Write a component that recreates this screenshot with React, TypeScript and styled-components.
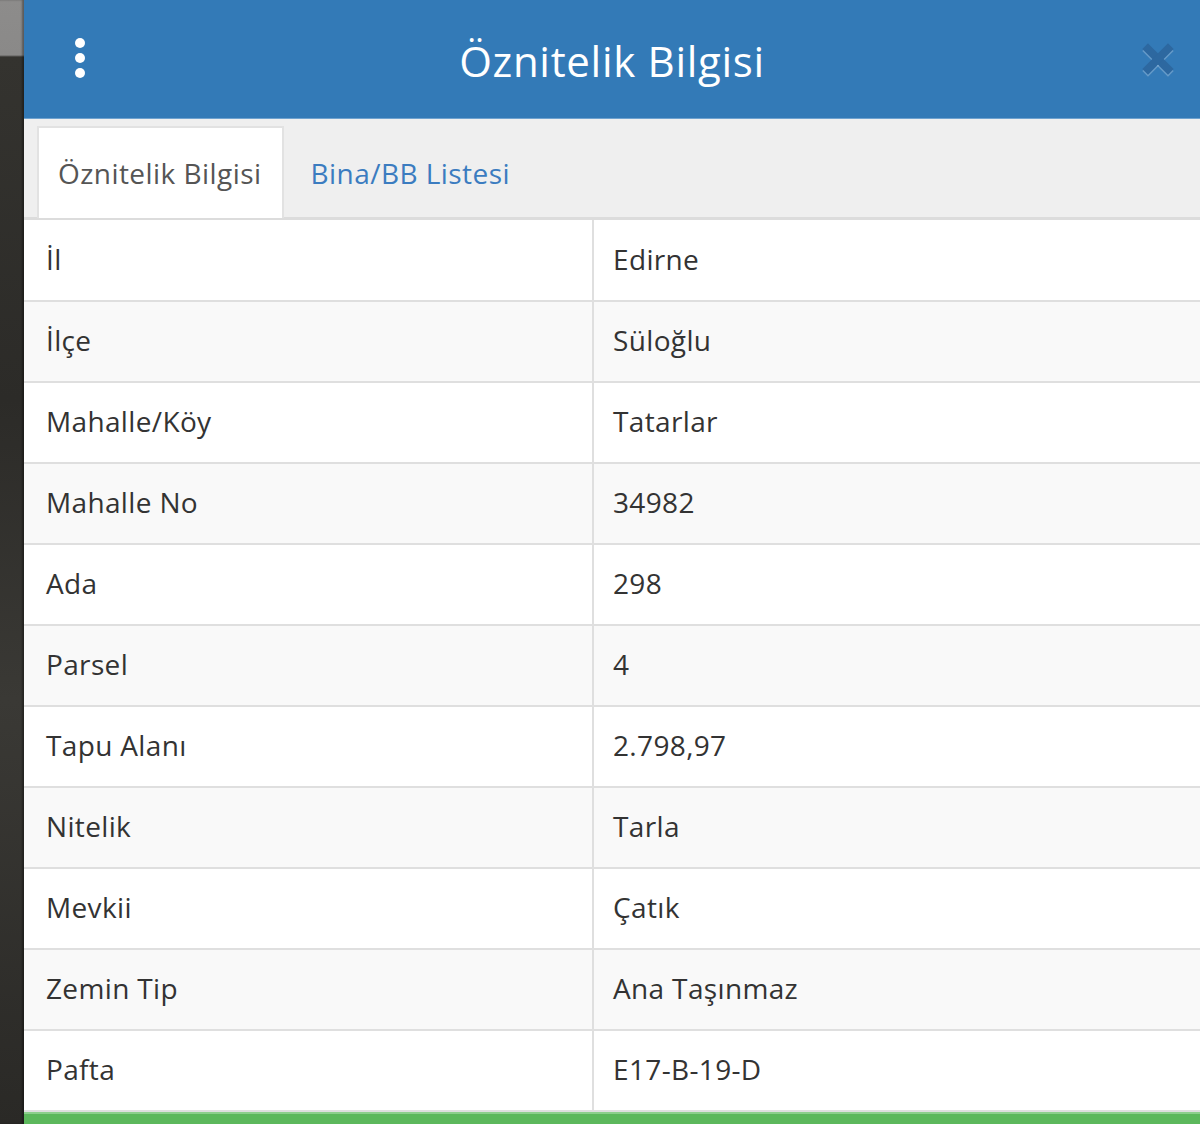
import React from 'react';
import styled, { createGlobalStyle } from 'styled-components';

const GlobalStyle = createGlobalStyle`
    html, body {
        margin: 0;
        padding: 0;
        background: #2f2e2c;
    }
    body {
        font-family: 'Open Sans', 'Liberation Sans', sans-serif;
        color: #333;
    }
`;

const Page = styled.div`
    display: flex;
    width: 1200px;
    height: 1124px;
    overflow: hidden;
`;

// the map shows through on the left edge
const MapEdge = styled.div`
    width: 24px;
    flex-shrink: 0;
    background: linear-gradient(
        to bottom,
        #8d8c8b 0px,
        #8a8988 55px,
        #34332f 57px,
        #2c2b28 400px,
        #3a3935 700px,
        #2a2926 1124px
    );
    box-shadow: inset -2px 0 2px rgba(0, 0, 0, 0.35);
`;

const Panel = styled.div`
    flex: 1;
    display: flex;
    flex-direction: column;
    background: #fff;
    min-width: 0;
`;

const Header = styled.div`
    height: 118px;
    flex-shrink: 0;
    background: #337ab7;
    border-bottom: 1px solid #6fa2cf;
    display: flex;
    align-items: center;
`;

const MenuButton = styled.button`
    width: 112px;
    height: 100%;
    display: flex;
    flex-direction: column;
    align-items: center;
    justify-content: center;
    gap: 5px;
    background: none;
    border: 0;
    padding: 0 0 2px 0;
    cursor: pointer;
`;

const Dot = styled.span`
    width: 10px;
    height: 10px;
    border-radius: 50%;
    background: #fff;
`;

const Title = styled.h1`
    flex: 1;
    margin: 0;
    text-align: center;
    color: #fff;
    font-size: 42px;
    font-weight: 500;
    letter-spacing: 0.7px;
    padding-top: 2px;
`;

const CloseButton = styled.button`
    width: 112px;
    height: 100%;
    display: flex;
    align-items: center;
    justify-content: center;
    background: none;
    border: 0;
    padding: 0 0 0 28px;
    cursor: pointer;
`;

const TabBar = styled.div`
    flex-shrink: 0;
    display: flex;
    align-items: flex-end;
    height: 98px;
    padding: 0 13px;
    background: #efefef;
    border-bottom: 3px solid #dcdcdc;
`;

const Tab = styled.div<{ $active?: boolean }>`
    height: 90px;
    display: flex;
    align-items: center;
    padding: 0 ${p => (p.$active ? '20px 0 19px' : '21px')};
    margin-right: 4px;
    margin-bottom: -1px;
    font-size: 28px;
    letter-spacing: 0.45px;
    color: ${p => (p.$active ? '#555' : '#3b7cc0')};
    background: ${p => (p.$active ? '#fff' : 'transparent')};
    border: 2px solid ${p => (p.$active ? '#e2e2e2' : 'transparent')};
    border-bottom: 0;
`;

const Table = styled.table`
    width: 100%;
    border-collapse: collapse;
    table-layout: fixed;
`;

const Row = styled.tr`
    height: 81px;
    border-bottom: 2px solid #dfdfdf;
    background: #fff;

    &:nth-child(even) {
        background: #f9f9f9;
    }
`;

const Cell = styled.td<{ $label?: boolean }>`
    box-sizing: border-box;
    width: ${p => (p.$label ? '569px' : 'auto')};
    padding: 0 0 3px ${p => (p.$label ? '22px' : '19px')};
    font-size: 28px;
    letter-spacing: 0.35px;
    color: #333;
    border-right: ${p => (p.$label ? '2px solid #dfdfdf' : '0')};
    vertical-align: middle;
    white-space: nowrap;
`;

const Filler = styled.div`
    flex: 1;
`;

const StatusBar = styled.div`
    height: 12px;
    flex-shrink: 0;
    background: #5cb85c;
    border-top: 2px solid #8ccf8c;
`;

const CloseIcon = () => (
    <svg width="32" height="32" viewBox="0 0 32 32" style={{ overflow: 'visible' }}>
        <g strokeWidth="8" strokeLinecap="square">
            <g stroke="rgba(255,255,255,0.25)" transform="translate(0 2)">
                <line x1="6" y1="6" x2="26" y2="26" />
                <line x1="26" y1="6" x2="6" y2="26" />
            </g>
            <g stroke="#2d68a0">
                <line x1="6" y1="6" x2="26" y2="26" />
                <line x1="26" y1="6" x2="6" y2="26" />
            </g>
        </g>
    </svg>
);

const rows: [string, string][] = [
    ['İl', 'Edirne'],
    ['İlçe', 'Süloğlu'],
    ['Mahalle/Köy', 'Tatarlar'],
    ['Mahalle No', '34982'],
    ['Ada', '298'],
    ['Parsel', '4'],
    ['Tapu Alanı', '2.798,97'],
    ['Nitelik', 'Tarla'],
    ['Mevkii', 'Çatık'],
    ['Zemin Tip', 'Ana Taşınmaz'],
    ['Pafta', 'E17-B-19-D'],
];

const App = () => {
    return (
        <Page>
            <GlobalStyle />
            <MapEdge />
            <Panel>
                <Header>
                    <MenuButton aria-label="menu">
                        <Dot />
                        <Dot />
                        <Dot />
                    </MenuButton>
                    <Title>Öznitelik Bilgisi</Title>
                    <CloseButton aria-label="close">
                        <CloseIcon />
                    </CloseButton>
                </Header>
                <TabBar>
                    <Tab $active>Öznitelik Bilgisi</Tab>
                    <Tab>Bina/BB Listesi</Tab>
                </TabBar>
                <Table>
                    <tbody>
                        {rows.map(([label, value]) => (
                            <Row key={label}>
                                <Cell $label>{label}</Cell>
                                <Cell>{value}</Cell>
                            </Row>
                        ))}
                    </tbody>
                </Table>
                <Filler />
                <StatusBar />
            </Panel>
        </Page>
    );
};

export default App;
